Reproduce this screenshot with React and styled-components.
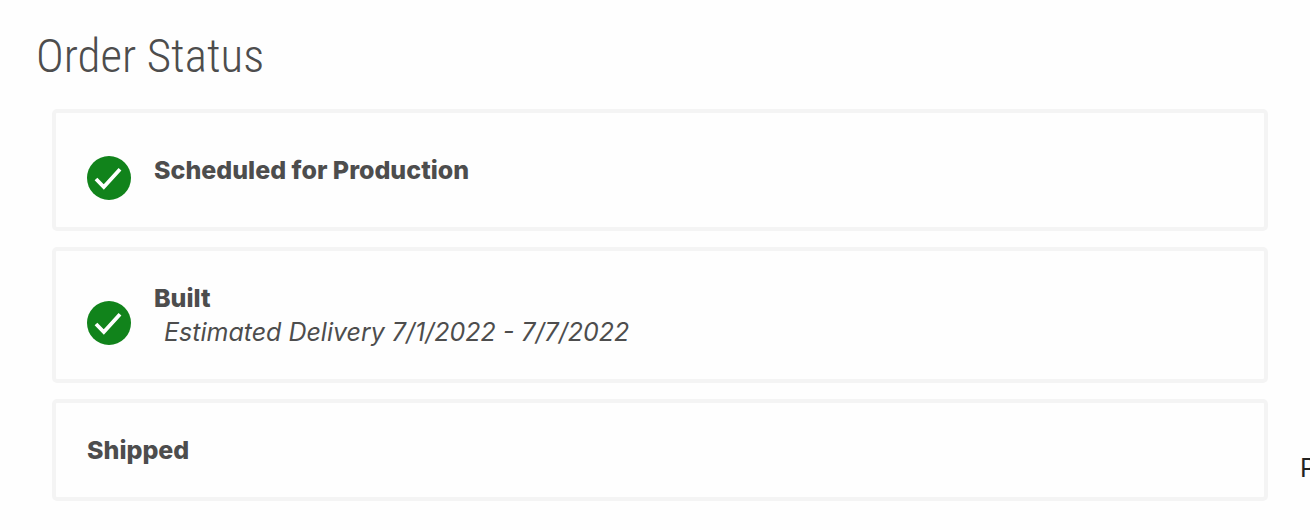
import React from "react";
import styled, { createGlobalStyle } from "styled-components";

const steps = [
  { title: "Scheduled for Production", done: true },
  {
    title: "Built",
    done: true,
    note: "Estimated Delivery 7/1/2022 - 7/7/2022",
  },
  { title: "Shipped" },
];

function CheckIcon() {
  return (
    <Icon viewBox="0 0 44 44" role="img" aria-label="Complete">
      <circle cx="22" cy="22" r="22" fill="#11831b" />
      <path
        d="M9 23 L16.8 31 L33 13.2"
        fill="none"
        stroke="#fff"
        strokeWidth="3.8"
      />
    </Icon>
  );
}

function Step({ title, note, done }) {
  return (
    <Card>
      {done && <CheckIcon />}
      <div>
        <StepTitle>{title}</StepTitle>
        {note && <Note>{note}</Note>}
      </div>
    </Card>
  );
}

function App() {
  return (
    <Page>
      <GlobalStyle />
      <Main>
        <Heading>Order Status</Heading>
        <Steps>
          {steps.map((step) => (
            <Step key={step.title} {...step} />
          ))}
        </Steps>
      </Main>
      <Side>P</Side>
    </Page>
  );
}

export default App;

const GlobalStyle = createGlobalStyle`
  * {
    box-sizing: border-box;
  }

  body {
    margin: 0;
    background: #fefefe;
    color: #4d4d4d;
    font-family: Inter, "Liberation Sans", sans-serif;
    font-size: 25px;
    line-height: 34px;
  }
`;

const Page = styled.div`
  display: flex;
  align-items: flex-end;
  overflow: hidden;
`;

const Main = styled.main`
  flex: 1;
  min-width: 0;
  padding: 28px 32px 0 36px;
`;

const Heading = styled.h1`
  margin: 0 0 25px;
  font-family: "Roboto Condensed", Roboto, sans-serif;
  font-size: 47px;
  font-weight: 300;
  line-height: 56px;
`;

const Steps = styled.ol`
  display: flex;
  flex-direction: column;
  gap: 16px;
  margin: 0 0 0 16px;
  padding: 0;
  list-style: none;
`;

const Card = styled.li`
  display: flex;
  align-items: center;
  padding: 30px 31px;
  border: 4px solid #f4f4f4;
  border-radius: 5px;
`;

// the mark hangs a little below the middle of the row
const Icon = styled.svg`
  flex: none;
  width: 44px;
  height: 44px;
  margin: 13px 23px -3px 0;
`;

const StepTitle = styled.h2`
  margin: 0;
  font-size: inherit;
  font-weight: 800;
`;

const Note = styled.p`
  margin: 0;
  padding-left: 10px;
  font-style: italic;
`;

const Side = styled.aside`
  flex: none;
  width: 10px;
  padding-bottom: 16px;
  color: #222;
  white-space: nowrap;
`;
